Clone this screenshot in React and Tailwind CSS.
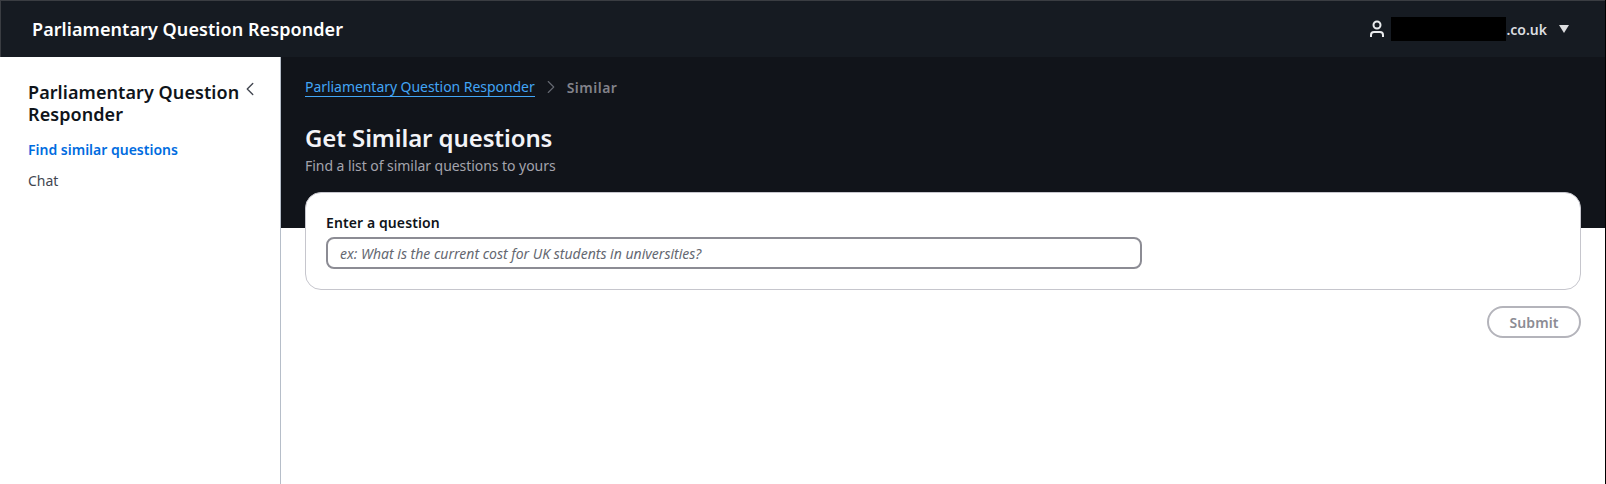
import { ChevronLeft, ChevronRight } from "lucide-react";

export default function App() {
  return (
    <div className="min-h-screen h-[484px] flex flex-col bg-white font-['Noto_Sans',sans-serif] text-[14px] overflow-hidden border-r border-black">
      <header className="h-[57px] shrink-0 bg-[#161b22] border-t border-l border-[#3a3d42] flex items-center justify-between pl-[31px] pr-[36px]">
        <h1 className="text-[18px] tracking-[0.07px] font-semibold text-white">Parliamentary Question Responder</h1>
        <div className="flex items-center text-[#dcdde0] font-semibold">
          <svg width="16" height="18" viewBox="0 0 16 18" fill="none" stroke="#e9ebed" strokeWidth="2" className="mr-[6px]">
            <circle cx="8" cy="5" r="3.5" />
            <path d="M2 17v-2a3 3 0 0 1 3-3h6a3 3 0 0 1 3 3v2" />
          </svg>
          <span className="w-[115px] h-[24px] bg-black" />
          <span>.co.uk</span>
          <svg width="10" height="8" viewBox="0 0 10 8" className="ml-[12px]">
            <path d="M0 0h10L5 8z" fill="#dcdde0" />
          </svg>
        </div>
      </header>

      <div className="flex flex-1 min-h-0">
        <aside className="w-[281px] shrink-0 border-r border-[#b6bec9] pl-[28px] pr-[5px] pt-[24px] relative">
          <h2 className="text-[18px] tracking-[0.07px] leading-[22px] font-semibold text-[#0f141a] w-[220px]">Parliamentary Question Responder</h2>
          <button className="absolute left-[239px] top-[21px] text-[#424650]">
            <ChevronLeft size={22} strokeWidth={1.5} />
          </button>
          <nav className="mt-[15px] flex flex-col gap-[12px]">
            <a className="text-[#006ce0] font-semibold leading-[19px]">Find similar questions</a>
            <a className="text-[#424650] leading-[19px]">Chat</a>
          </nav>
        </aside>

        <main className="flex-1 min-w-0">
          <section className="bg-[#11141a] h-[171px] px-[24px] pt-[20px]">
            <div className="flex items-center h-[20px] text-[14px]">
              <a className="text-[#42a5f5] border-b border-[#42a5f5] leading-[19px] tracking-[-0.05px]">Parliamentary Question Responder</a>
              <ChevronRight size={22} strokeWidth={1.25} className="text-[#656871] mx-[5px]" />
              <span className="text-[#82828a] font-semibold tracking-[0.5px]">Similar</span>
            </div>
            <h2 className="mt-[26px] text-[24px] tracking-[-0.1px] leading-[30px] font-semibold text-[#f3f3f7]">Get Similar questions</h2>
            <p className="text-[#a4a4ad] leading-[20px] mt-[3px] tracking-[-0.05px]">Find a list of similar questions to yours</p>
          </section>

          <div className="px-[24px] -mt-[36px]">
            <div className="h-[98px] bg-white border border-[#c6c6cd] rounded-[16px] pt-[21px] px-[20px]">
              <label className="block font-semibold text-[#0f141a] leading-[18px] mb-[5px] tracking-[0.1px]">Enter a question</label>
              <input
                className="block w-[816px] h-[32px] border-2 border-[#8c8c94] rounded-[8px] px-[12px] text-[14px] italic outline-none placeholder:text-[#656871] placeholder:opacity-100"
                placeholder="ex: What is the current cost for UK students in universities?"
              />
            </div>
            <div className="flex justify-end mt-[16px]">
              <button className="h-[32px] w-[94px] rounded-full border-2 border-[#b4b4bb] text-[#8c8c94] font-semibold tracking-[0.1px]">Submit</button>
            </div>
          </div>
        </main>
      </div>
    </div>
  );
}
